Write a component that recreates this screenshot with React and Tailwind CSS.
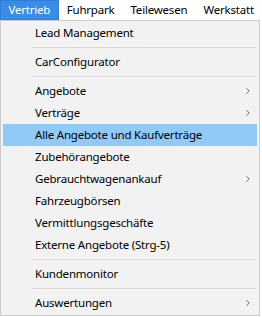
import { ChevronRight } from "lucide-react";

const items = [
  { label: "Lead Management" },
  { sep: true },
  { label: "CarConfigurator" },
  { sep: true },
  { label: "Angebote", sub: true },
  { label: "Verträge", sub: true },
  { label: "Alle Angebote und Kaufverträge", active: true },
  { label: "Zubehörangebote" },
  { label: "Gebrauchtwagenankauf", sub: true },
  { label: "Fahrzeugbörsen" },
  { label: "Vermittlungsgeschäfte" },
  { label: "Externe Angebote (Strg-5)" },
  { sep: true },
  { label: "Kundenmonitor" },
  { sep: true },
  { label: "Auswertungen", sub: true },
];

const menus = ["Vertrieb", "Fuhrpark", "Teilewesen", "Werkstatt"];

export default function App() {
  return (
    <div
      className="w-[262px] h-[317px] bg-white text-[11.5px] tracking-[-0.2px] text-black overflow-hidden"
      style={{ fontFamily: '"Segoe UI", "Noto Sans", sans-serif' }}
    >
      {/* menu bar */}
      <div className="flex h-[20px] items-stretch">
        {menus.map((m, i) => (
          <div
            key={m}
            className={`flex items-center leading-none ${
              i === 0
                ? "px-[7.5px] bg-[#3a8de6] text-white border border-[#2f7fd6]"
                : "px-[7px] border border-transparent"
            }`}
          >
            {m}
          </div>
        ))}
      </div>

      {/* dropdown */}
      <div className="w-[260px] bg-[#f2f2f2] border border-[#cccccc] pt-[1px] pb-[1px] px-[2px]">
        {items.map((it, i) =>
          it.sep ? (
            <div key={i} className="h-[7px] flex items-center pl-[29px] pr-[1px]">
              <div className="h-px w-full bg-[#d7d7d7]" />
            </div>
          ) : (
            <div
              key={i}
              className={`h-[22px] flex items-center pl-[32px] pr-[4px] ${
                it.active ? "bg-[#91c9f7]" : ""
              }`}
            >
              <span className="flex-1">{it.label}</span>
              {it.sub && (
                <ChevronRight size={10} strokeWidth={1.8} className="text-[#444]" />
              )}
            </div>
          )
        )}
      </div>
    </div>
  );
}
